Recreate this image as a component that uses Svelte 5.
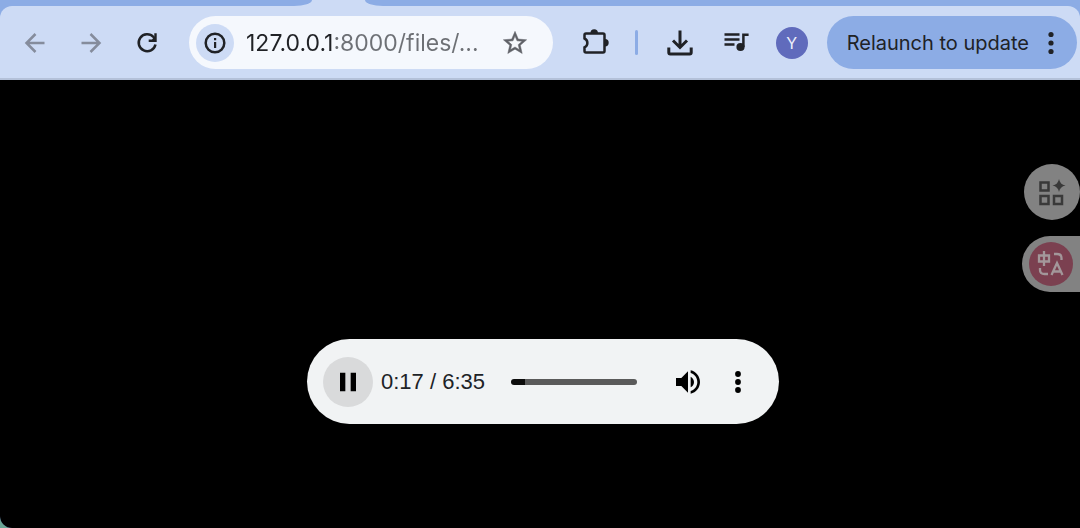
<script lang="ts">
  /** Compact browser window with an audio file open in the media viewer. */

  const url = '127.0.0.1:8000/files/...';
  const time = { elapsed: '0:17', total: '6:35' };

  // Slider position, in percent of the track.
  let position = $state(11);
</script>

<div class="window">
  <div class="tab-strip">
    <div class="tabs-before"></div>
    <div class="tabs-after"></div>
  </div>

  <header class="toolbar">
    <button type="button" class="tool muted" aria-label="Back">
      <svg viewBox="0 0 28 28"><path class="line" d="M23.500 14H6.500M14.500 5l-9 9 9 9" /></svg>
    </button>
    <button type="button" class="tool muted" aria-label="Forward">
      <svg viewBox="0 0 28 28"><path class="line" d="M4.500 14h17M13.500 5l9 9-9 9" /></svg>
    </button>
    <button type="button" class="tool" aria-label="Reload">
      <svg viewBox="0 0 28 28">
        <path class="line" d="M22.500 15.500A8.500 8.500 0 1 1 20.500 8L22 10" />
        <path d="M21.300 4.300h2.400v8.700h-8v-2.500h3.300L21.300 8z" />
      </svg>
    </button>

    <div class="omnibox">
      <button type="button" class="site-info" aria-label="View site information">
        <svg viewBox="0 0 28 28">
          <circle class="line" cx="14" cy="14" r="9.300" />
          <path d="M13 13h2.200v6H13zM13 9h2.200v2.200H13z" />
        </svg>
      </button>
      <input class="address" type="text" value={url} aria-label="Address" spellcheck="false" />
      <button type="button" class="bookmark" aria-label="Bookmark this page">
        <svg viewBox="0 0 24 24">
          <path
            d="M22 9.240l-7.190-.620L12 2 9.190 8.630 2 9.240l5.460 4.730L5.820 21 12 17.270 18.180 21l-1.630-7.030L22 9.240zM12 15.400l-3.760 2.270 1-4.280-3.320-2.880 4.380-.380L12 6.100l1.710 4.040 4.380.380-3.320 2.880 1 4.280L12 15.400z"
          />
        </svg>
      </button>
    </div>

    <button type="button" class="tool" aria-label="Extensions">
      <svg viewBox="0 0 28 28">
        <path
          class="line"
          d="M5 4.500h17q1.500 0 1.500 1.500v16q0 1.500-1.500 1.500H5q-1.500 0-1.500-1.500v-3.700a4.800 4.800 0 0 0 0-8.800V6q0-1.500 1.500-1.500z"
        />
        <path d="M9.500 4a3.700 3.700 0 0 1 7.400 0zM24 10a3.700 3.700 0 0 1 0 7.400z" />
      </svg>
    </button>
    <span class="divider"></span>
    <button type="button" class="tool" aria-label="Downloads">
      <svg viewBox="0 0 28 28">
        <path class="line thick" d="M14 1.500V18M7 11.500l7 7 7-7M2.800 18.500v5q0 1.500 1.500 1.500h19.400q1.500 0 1.500-1.500v-5" />
      </svg>
    </button>
    <button type="button" class="tool" aria-label="Media controls">
      <svg viewBox="0 0 28 28">
        <path class="line" d="M2.500 5.500h15M2.500 10.500h15M2.500 15.500h10M21.400 18V5.800h5.200" />
        <circle cx="18.500" cy="18" r="4.100" />
      </svg>
    </button>
    <button type="button" class="avatar" aria-label="Profile">Y</button>
    <button type="button" class="relaunch">
      Relaunch to update
      <svg class="dots" viewBox="0 0 8 28">
        <circle cx="4" cy="5.500" r="2.600" />
        <circle cx="4" cy="14" r="2.600" />
        <circle cx="4" cy="22.500" r="2.600" />
      </svg>
    </button>
  </header>

  <main class="viewer">
    <section class="player" aria-label="Audio player">
      <button type="button" class="control play" aria-label="Pause">
        <svg viewBox="0 0 24 24"><path d="M6 19h4V5H6v14zm8-14v14h4V5h-4z" /></svg>
      </button>
      <span class="time">{time.elapsed} / {time.total}</span>
      <input
        class="scrubber"
        type="range"
        min="0"
        max="100"
        bind:value={position}
        aria-label="Seek"
        style="--played: {position}%"
      />
      <button type="button" class="control" aria-label="Mute">
        <svg viewBox="0 0 24 24">
          <path
            d="M3 9v6h4l5 5V4L7 9H3zm13.500 3c0-1.770-1.020-3.290-2.500-4.030v8.050c1.480-.730 2.500-2.250 2.500-4.020zM14 3.230v2.060c2.890.860 5 3.540 5 6.710s-2.110 5.850-5 6.710v2.060c4.010-.910 7-4.490 7-8.770s-2.990-7.860-7-8.770z"
          />
        </svg>
      </button>
      <button type="button" class="control" aria-label="More options">
        <svg viewBox="0 0 32 32">
          <circle cx="16" cy="8" r="2.900" />
          <circle cx="16" cy="16" r="2.900" />
          <circle cx="16" cy="24" r="2.900" />
        </svg>
      </button>
    </section>
  </main>

  <!-- Floating extension buttons docked to the right edge -->
  <aside class="dock">
    <button type="button" class="dock-button round" aria-label="Widgets">
      <svg viewBox="0 0 28 28">
        <path class="line" d="M2.500 4.500h8v8h-8zM2.500 18h8v8h-8zM16 18h8v8h-8z" />
        <path d="M21 1q1 5.500 6.500 6.500-5.500 1-6.500 6.500-1-5.500-6.500-6.500 5.500-1 6.500-6.500z" />
      </svg>
    </button>
    <button type="button" class="dock-button side" aria-label="Translate">
      <svg class="translate" viewBox="0 0 44 44">
        <circle class="disc" cx="22" cy="22" r="22" />
        <path class="mark" d="M10 13.500h10v6H10zM15 9v15M25 12h3q4.500 0 4.500 4v2M11 26v2q0 4 4.500 4H19M22.500 33l5.500-12 5.500 12M24.500 29.500h7" />
      </svg>
    </button>
  </aside>
</div>

<style>
  :global(body) {
    margin: 0;
    background: #69a493;
  }

  .window {
    position: relative;
    display: flex;
    flex-direction: column;
    min-height: 100vh;
    overflow: hidden;
    border-bottom-left-radius: 12px;
    background: #8cace5;
    color: #202226;
    font-family: Inter, "Liberation Sans", sans-serif;
  }

  button {
    display: flex;
    align-items: center;
    justify-content: center;
    flex: none;
    margin: 0;
    padding: 0;
    border: 0;
    background: none;
    color: inherit;
    font: inherit;
    cursor: pointer;
  }

  svg {
    display: block;
    width: 28px;
    height: 28px;
    fill: currentColor;
  }

  .line {
    fill: none;
    stroke: currentColor;
    stroke-width: 2.5;
  }

  .line.thick {
    stroke-width: 3;
  }

  .tab-strip {
    display: flex;
    justify-content: space-between;
    height: 6px;
    background: #cddbf5;
  }

  .tabs-before,
  .tabs-after {
    background: #8cace5;
  }

  .tabs-before {
    width: 312px;
    border-bottom-right-radius: 18px 6px;
  }

  .tabs-after {
    flex: 1;
    margin-left: 53px;
    border-bottom-left-radius: 18px 6px;
  }

  .toolbar {
    display: flex;
    align-items: center;
    padding: 10px 3px 9px 7px;
    border-bottom: 2px solid #b4c1d9;
    border-radius: 12px 12px 0 0;
    background: #cddbf5;
  }

  .tool {
    width: 56px;
    height: 53px;
  }

  .muted {
    color: #858c9c;
  }

  .omnibox {
    display: flex;
    align-items: center;
    flex: 1;
    min-width: 0;
    height: 53px;
    margin: 0 14px;
    padding: 0 24px 0 7px;
    border-radius: 27px;
    background: #f5f8fd;
    box-sizing: border-box;
  }

  .site-info {
    width: 38px;
    height: 38px;
    border-radius: 50%;
    background: #cddbf5;
  }

  .address {
    flex: 1;
    min-width: 0;
    height: 32px;
    margin: 0 8px 0 12px;
    padding: 0;
    border: 0;
    outline: 0;
    /* host in dark, port and path in grey */
    background: linear-gradient(90deg, #202226 88px, #6d7075 88px);
    background-clip: text;
    -webkit-text-fill-color: transparent;
    font-family: inherit;
    font-size: 23px;
  }

  .bookmark {
    color: #606268;
  }

  .bookmark path {
    stroke: currentColor;
    stroke-width: 0.4;
  }

  .divider {
    width: 3px;
    height: 25px;
    margin: 0 14px 0 12px;
    border-radius: 2px;
    background: #8cace5;
  }

  .avatar {
    width: 32px;
    height: 32px;
    margin: 0 19px 0 12px;
    border-radius: 50%;
    background: #606bbc;
    color: #eef0fb;
    font-size: 16px;
  }

  .relaunch {
    gap: 18px;
    height: 53px;
    padding: 0 22px 0 20px;
    border-radius: 27px;
    background: #8cace5;
    font-size: 20px;
    white-space: nowrap;
  }

  .dots {
    width: 8px;
  }

  .viewer {
    display: flex;
    flex: 1;
    align-items: flex-start;
    justify-content: center;
    padding: 259px 0 24px 6px;
    background: #000;
  }

  .player {
    display: flex;
    align-items: center;
    width: 472px;
    height: 85px;
    padding: 0 16px;
    border-radius: 43px;
    background: #f1f3f4;
    box-sizing: border-box;
  }

  .control {
    width: 50px;
    height: 50px;
    border-radius: 50%;
    color: #000;
  }

  .control svg {
    width: 32px;
    height: 32px;
  }

  .play {
    background: #d9dadb;
  }

  .time {
    margin-left: 8px;
    font-family: "Liberation Sans", Arial, sans-serif;
    font-size: 22px;
    white-space: nowrap;
  }

  .scrubber {
    flex: 1;
    min-width: 0;
    height: 6px;
    margin: 0 26px;
    border-radius: 3px;
    background: linear-gradient(90deg, #0c0c0c var(--played), #5a5a5a var(--played));
    appearance: none;
    cursor: pointer;
  }

  .scrubber::-webkit-slider-thumb {
    width: 6px;
    height: 6px;
    appearance: none;
    opacity: 0;
  }

  .dock {
    position: absolute;
    top: 164px;
    right: 0;
    display: flex;
    flex-direction: column;
    align-items: flex-end;
    gap: 16px;
  }

  .dock-button {
    height: 56px;
    background: #828282;
  }

  .round {
    width: 56px;
    border-radius: 50%;
    color: #393939;
  }

  .side {
    width: 58px;
    border-radius: 28px 0 0 28px;
  }

  .translate {
    width: 44px;
    height: 44px;
  }

  .disc {
    fill: #7b4050;
  }

  .mark {
    fill: none;
    stroke: #a3979a;
    stroke-width: 2.3;
  }
</style>
